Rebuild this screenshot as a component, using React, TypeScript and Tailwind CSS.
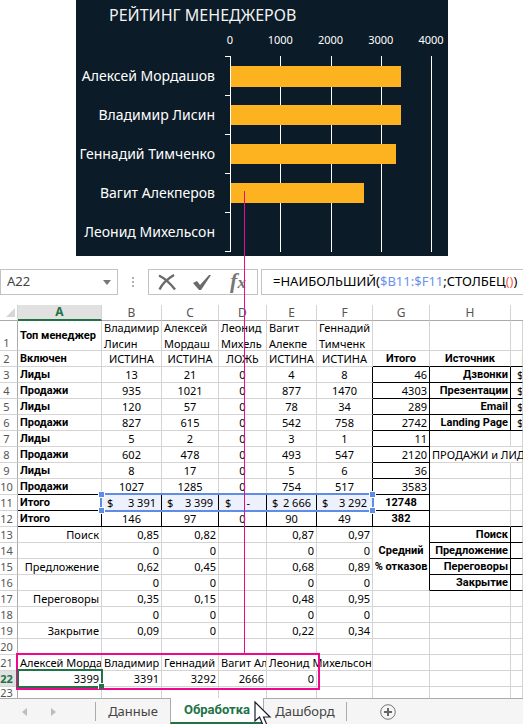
import type { ReactNode } from 'react';

const managers = [
  { name: 'Алексей Мордашов', value: 3399 },
  { name: 'Владимир Лисин', value: 3391 },
  { name: 'Геннадий Тимченко', value: 3292 },
  { name: 'Вагит Алекперов', value: 2666 },
  { name: 'Леонид Михельсон', value: 0 },
];

function RatingChart() {
  const axis = 154;
  const scale = 201 / 4000;
  return (
    <svg width="372" height="256" viewBox="0 0 372 256" className="block bg-[#0b1b27] font-['Noto_Sans',sans-serif]" role="img" aria-label="Рейтинг менеджеров">
      <text x="33" y="21" fontSize="16" fill="#f2f2f2">РЕЙТИНГ МЕНЕДЖЕРОВ</text>
      {[0, 1000, 2000, 3000, 4000].map((v) => (
        <g key={v}>
          <text x={axis + v * scale} y="44" fontSize="11" fill="#ffffff" textAnchor="middle">{v}</text>
          <rect x={Math.round(axis + v * scale)} y="56" width="1" height="196" fill="#ffffff" />
        </g>
      ))}
      {[56, 95, 134, 173, 212, 251].map((y) => (
        <rect key={y} x="149" y={y} width="6" height="1" fill="#ffffff" />
      ))}
      {managers.map((m, i) => (
        <g key={m.name}>
          <text x="139" y={81 + i * 39} fontSize="14" fill="#ffffff" textAnchor="end">{m.name}</text>
          <rect x={axis + 1} y={66 + i * 39} width={Math.floor(m.value * scale)} height={i === 0 ? 21 : 20} fill="#fcb31f" />
        </g>
      ))}
    </svg>
  );
}

function FormulaBar() {
  return (
    <div className="mt-[13px] mb-[10px] flex h-[26px] text-[#444]">
      <div className="flex w-[118px] shrink-0 items-center border border-[#c3c3c3] bg-white">
        <input aria-label="Имя" defaultValue="A22" className="w-0 grow pl-1.5 text-[13px] outline-none" />
        <button aria-label="Список имён" className="mr-1.5">
          <svg width="8" height="5" viewBox="0 0 8 5" className="block"><path d="M0 0h8L4 5z" fill="#777" /></svg>
        </button>
      </div>
      <div className="flex w-[30px] shrink-0 items-center justify-center">
        <svg width="2" height="11" viewBox="0 0 2 11"><path d="M0 0h2v2H0zM0 4h2v2H0zM0 8h2v2H0z" fill="#b0b0b0" /></svg>
      </div>
      <div className="flex w-[110px] shrink-0 items-center justify-between border border-[#c3c3c3] bg-white px-[9px]">
        <button aria-label="Отмена">
          <svg width="18" height="17" viewBox="0 0 18 17" className="block"><path d="M1 1.500C6 4 12 9 17 15.500M16 1C11 4 4 10 1.500 15.500" fill="none" stroke="#6a6a6a" strokeWidth="2.400" /></svg>
        </button>
        <button aria-label="Ввод">
          <svg width="20" height="17" viewBox="0 0 20 17" className="block"><path d="M1 9l4-2 3 4L17 1h2L9 16H7z" fill="#6a6a6a" /></svg>
        </button>
        <button aria-label="Вставить функцию" className="w-[20px] font-['Liberation_Serif',serif] text-[22px] leading-[22px] font-bold italic text-[#777]">
          <span>f</span><span className="text-[17px]">x</span>
        </button>
      </div>
      <div
        role="textbox"
        aria-label="Строка формул"
        className="ml-[3px] flex grow items-center border border-r-0 border-[#c3c3c3] bg-white pl-[11px] text-[13px] whitespace-nowrap text-black"
      >
        =НАИБОЛЬШИЙ(<span className="text-[#6a94ea]">$B11:$F11</span>;СТОЛБЕЦ<span className="text-[#f2604f]">()</span>)
      </div>
    </div>
  );
}

const columns = ['A', 'B', 'C', 'D', 'E', 'F', 'G', 'H'];

const rows: string[][] = [
  ['Топ менеджер', 'Владимир\nЛисин', 'Алексей\nМордаш', 'Леонид\nМихель', 'Вагит\nАлекпе', 'Геннадий\nТимченк', '', '', ''],
  ['Включен', 'ИСТИНА', 'ИСТИНА', 'ЛОЖЬ', 'ИСТИНА', 'ИСТИНА', 'Итого', 'Источник', 'П'],
  ['Лиды', '13', '21', '0', '4', '8', '46', 'Дзвонки', '$'],
  ['Продажи', '935', '1021', '0', '877', '1470', '4303', 'Презентации', '$'],
  ['Лиды', '120', '57', '0', '78', '34', '289', 'Email', '$'],
  ['Продажи', '827', '615', '0', '542', '758', '2742', 'Landing Page', '$'],
  ['Лиды', '5', '2', '0', '3', '1', '11', '', ''],
  ['Продажи', '602', '478', '0', '493', '547', '2120', 'ПРОДАЖИ и ЛИДЫ', ''],
  ['Лиды', '8', '17', '0', '5', '6', '36', '', ''],
  ['Продажи', '1027', '1285', '0', '754', '517', '3583', '', ''],
  ['Итого', '3 391', '3 399', '-', '2 666', '3 292', '12748', '', ''],
  ['Итого', '146', '97', '0', '90', '49', '382', '', ''],
  ['Поиск', '0,85', '0,82', '', '0,87', '0,97', 'Средний\n% отказов', 'Поиск', ''],
  ['', '0', '0', '', '0', '0', '', 'Предложение', ''],
  ['Предложение', '0,62', '0,45', '', '0,68', '0,89', '', 'Переговоры', ''],
  ['', '0', '0', '', '0', '0', '', 'Закрытие', ''],
  ['Переговоры', '0,35', '0,15', '', '0,48', '0,95', '', '', ''],
  ['', '0', '0', '', '0', '0', '', '', ''],
  ['Закрытие', '0,09', '0', '', '0,22', '0,34', '', '', ''],
  ['', '', '', '', '', '', '', '', ''],
  ['Алексей Мордашов', 'Владимир Лисин', 'Геннадий Тимченко', 'Вагит Алекперов', 'Леонид Михельсон', '', '', '', ''],
  ['3399', '3391', '3292', '2666', '0', '', '', '', ''],
  ['', '', '', '', '', '', '', '', ''],
];

const bold = "font-['Roboto',sans-serif] font-bold";

function blackRight(r: number, c: number) {
  if (c < 5) return r === 11 || r === 12;
  if (c === 5) return r >= 3 && r <= 12;
  if (c === 6) return r >= 3 && r <= 16;
  return c === 7 && ((r >= 3 && r <= 6) || (r >= 13 && r <= 16));
}

function blackBottom(r: number, c: number) {
  if (r === 12) return true;
  if (c === 0) return r === 10 || r === 11;
  if (c === 6) return r >= 2 && r <= 11;
  return c >= 7 && ((r >= 2 && r <= 6) || (r >= 13 && r <= 16));
}

function Cell({ r, c, text }: { r: number; c: number; text: string }) {
  const merged = r === 13 && c === 6;
  const spill = (r === 8 && c === 7) || (r === 21 && c === 4);
  const money = r === 11 && c >= 1 && c <= 5;
  const strong = (c === 0 && r <= 12) || (c === 6 && (r === 2 || r >= 11)) || (c === 7 && r !== 8);

  let align = 'justify-end';
  if (r === 1 || r === 21 || c === 8 || (c === 0 && r <= 12) || (r === 8 && c === 7)) align = 'justify-start';
  else if (r <= 12 && c >= 1 && c <= 5) align = 'justify-center';
  else if (c >= 6 && r === 2) align = 'justify-center';
  else if (c === 6 && r >= 11) align = 'justify-center';
  if (money) align = 'justify-between';

  const right = blackRight(r, c) ? 'border-r-black' : spill ? 'border-r-transparent' : 'border-r-[#d4d4d4]';
  const bottom = r === 23 ? '' : blackBottom(r, c) ? 'border-b border-b-black' : 'border-b border-b-[#d4d4d4]';
  const amountPad = text === '-' ? 'pl-1.5 pr-4' : 'px-[5px]';
  const lastPad = r === 2 ? 'pl-2.5' : 'pl-1.5';
  const pad = money ? amountPad : c === 8 ? lastPad : 'px-0.5';
  const height = r === 1 ? 'h-[29px]' : merged ? 'h-[63px]' : r === 23 ? 'h-[11px]' : 'h-[15px]';
  let content: ReactNode = text;
  if (money) content = (<><span>$</span><span>{text}</span></>);

  return (
    <td rowSpan={merged ? 4 : 1} className={`border-r p-0 ${right} ${bottom} ${money ? 'bg-[#edf1fc]' : ''}`}>
      <div
        className={`flex items-center whitespace-pre ${height} ${align} ${pad} ${spill || r === 1 || merged ? '' : 'overflow-hidden'} ${strong ? bold : ''} ${merged ? 'text-center' : ''} ${r === 2 && c === 8 ? 'text-[#f3c969]' : ''}`}
      >
        {content}
      </div>
    </td>
  );
}

function Handle({ className }: { className: string }) {
  return <span className={`absolute size-[7px] border border-white bg-[#5f8ce6] ${className}`} />;
}

function Sheet() {
  return (
    <div className="relative text-[11px] leading-4 text-black">
      <table className="w-full table-fixed border-separate border-spacing-0">
        <colgroup>
          <col className="w-[18px]" />
          <col className="w-[84px]" />
          <col className="w-[60px]" />
          <col className="w-[57px]" />
          <col className="w-[48px]" />
          <col className="w-[50px]" />
          <col className="w-[56px]" />
          <col className="w-[57px]" />
          <col className="w-[81px]" />
          <col />
        </colgroup>
        <thead>
          <tr className="text-[12px] text-[#555]">
            <th className="border-r border-b border-r-[#d4d4d4] border-b-[#ababab] p-0">
              <svg width="9" height="9" viewBox="0 0 9 9" className="ml-1.5 block"><path d="M9 0v9H0z" fill="#d6d6d6" /></svg>
            </th>
            {columns.map((name) => (
              <th key={name} scope="col" className={`border-r border-r-[#d4d4d4] p-0 ${name === 'A' ? 'border-b-2 border-b-[#217346] bg-[#e1e1e1] font-bold text-[#217346]' : 'border-b border-b-[#ababab] font-normal'}`}>
                <div className={`flex items-center justify-center ${name === 'A' ? 'h-[14px]' : 'h-[15px]'}`}>{name}</div>
              </th>
            ))}
            <th className="border-b border-b-[#ababab] p-0" />
          </tr>
        </thead>
        <tbody>
          {rows.map((row, i) => {
            const r = i + 1;
            return (
              <tr key={r}>
                <th
                  scope="row"
                  className={`border-r p-0 align-bottom ${r === 23 ? '' : 'border-b border-b-[#d4d4d4]'} ${r === 22 ? 'border-r-[#217346] bg-[#e1e1e1] font-bold text-[#217346]' : 'border-r-[#ababab] font-normal text-[#555]'}`}
                >
                  <div className={`flex items-center justify-center pr-1 ${r === 23 ? 'h-[11px]' : 'h-[15px]'}`}>{r}</div>
                </th>
                {row.map((text, c) => (c === 6 && r >= 14 && r <= 16 ? null : <Cell key={c} r={r} c={c} text={text} />))}
              </tr>
            );
          })}
        </tbody>
      </table>

      {/* formula range B11:F11 */}
      <div className="absolute top-[188px] left-[100px] h-[19px] w-[274px] border-2 border-[#5f8ce6]">
        <Handle className="-top-[4px] -left-[4px]" />
        <Handle className="-top-[4px] -right-[4px]" />
        <Handle className="-bottom-[4px] -left-[4px]" />
        <Handle className="-right-[4px] -bottom-[4px]" />
      </div>
      {/* callout around the result rows */}
      <div className="absolute top-[348px] left-[16px] h-[37px] w-[304px] border-2 border-[#f0088c]" />
      {/* active cell A22 */}
      <div className="absolute top-[364px] left-[17px] h-[19px] w-[86px] border-2 border-[#217346]">
        <span className="absolute -right-[3px] -bottom-[3px] size-[6px] border-t border-l border-white bg-[#217346]" />
      </div>
    </div>
  );
}

function SheetTabs() {
  return (
    <nav aria-label="Листы" className="relative flex h-[26px] border-t border-[#ababab] bg-[#f5f5f5] text-[13px] text-[#444]">
      <div className="flex w-[95px] shrink-0 items-center gap-6 pl-[22px]">
        <button aria-label="Предыдущий лист"><svg width="5" height="8" viewBox="0 0 5 8" className="block"><path d="M5 0v8L0 4z" fill="#bdbdbd" /></svg></button>
        <button aria-label="Следующий лист"><svg width="5" height="8" viewBox="0 0 5 8" className="block"><path d="M0 0v8l5-4z" fill="#bdbdbd" /></svg></button>
      </div>
      <button className="my-[3px] w-[75px] shrink-0 border-l border-[#ababab]">Данные</button>
      <button className="-mt-px w-[94px] shrink-0 border-x border-b-2 border-x-[#ababab] border-b-[#217346] bg-white font-['Roboto',sans-serif] font-bold text-[#217346]">Обработка</button>
      <button className="my-[3px] w-[83px] shrink-0 border-r border-[#ababab]">Дашборд</button>
      <button aria-label="Новый лист" className="ml-[33px]">
        <svg width="16" height="16" viewBox="0 0 16 16" className="block"><circle cx="8" cy="8" r="7.300" fill="none" stroke="#777" /><path d="M8 4v8M4 8h8" stroke="#666" strokeWidth="2" /></svg>
      </button>
    </nav>
  );
}

export default function App() {
  return (
    <main className="relative w-full overflow-hidden bg-white font-['Noto_Sans',sans-serif]">
      <div className="pl-[76px]"><RatingChart /></div>
      <FormulaBar />
      <Sheet />
      <SheetTabs />
      {/* leader from the chart bar to the result rows */}
      <div className="absolute top-[191px] left-[244px] h-[463px] w-px bg-[#f0088c]" />
      <svg width="18" height="24" viewBox="0 0 18 24" className="absolute top-[701px] left-[254px]">
        <path d="M1 1v19l4.500-4 3.500 8h4l-3.500-8H16z" fill="#fff" stroke="#1c1c30" strokeWidth="1.200" />
      </svg>
    </main>
  );
}
